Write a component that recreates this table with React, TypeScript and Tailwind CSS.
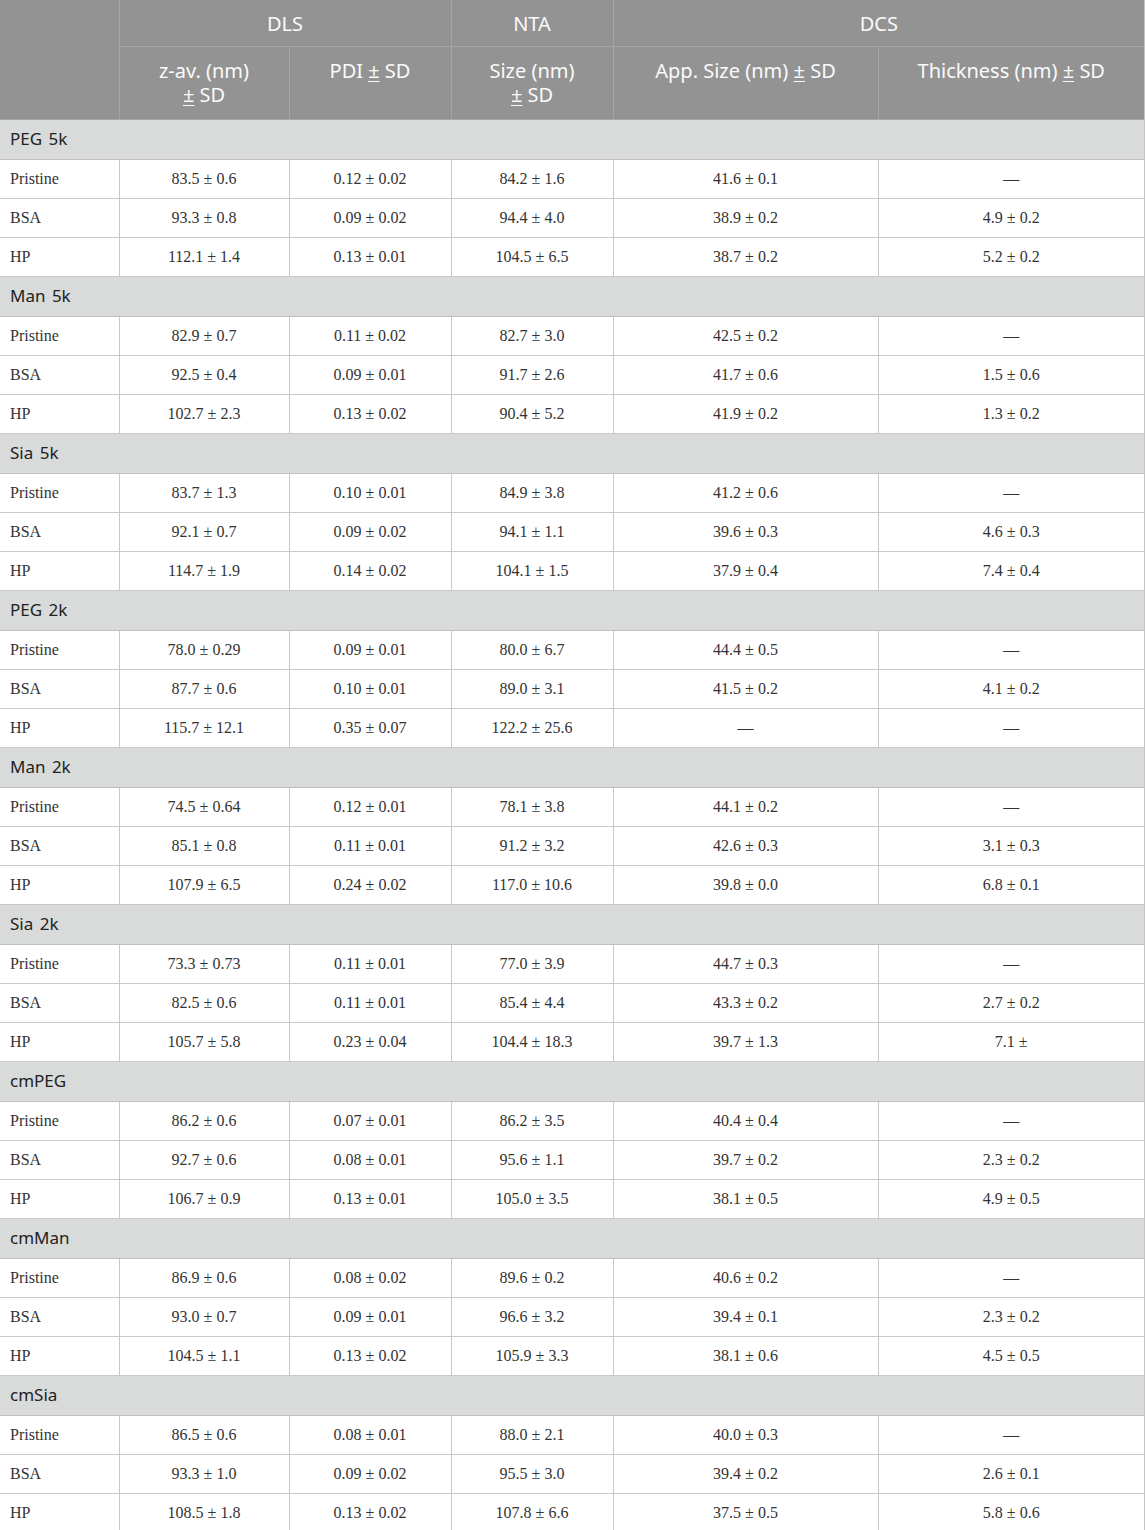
import React from "react";

type Row = [string, string, string, string, string, string];

const groups: { name: string; rows: Row[] }[] = [
  {
    name: "PEG 5k",
    rows: [
      ["Pristine", "83.5 ± 0.6", "0.12 ± 0.02", "84.2 ± 1.6", "41.6 ± 0.1", "—"],
      ["BSA", "93.3 ± 0.8", "0.09 ± 0.02", "94.4 ± 4.0", "38.9 ± 0.2", "4.9 ± 0.2"],
      ["HP", "112.1 ± 1.4", "0.13 ± 0.01", "104.5 ± 6.5", "38.7 ± 0.2", "5.2 ± 0.2"],
    ],
  },
  {
    name: "Man 5k",
    rows: [
      ["Pristine", "82.9 ± 0.7", "0.11 ± 0.02", "82.7 ± 3.0", "42.5 ± 0.2", "—"],
      ["BSA", "92.5 ± 0.4", "0.09 ± 0.01", "91.7 ± 2.6", "41.7 ± 0.6", "1.5 ± 0.6"],
      ["HP", "102.7 ± 2.3", "0.13 ± 0.02", "90.4 ± 5.2", "41.9 ± 0.2", "1.3 ± 0.2"],
    ],
  },
  {
    name: "Sia 5k",
    rows: [
      ["Pristine", "83.7 ± 1.3", "0.10 ± 0.01", "84.9 ± 3.8", "41.2 ± 0.6", "—"],
      ["BSA", "92.1 ± 0.7", "0.09 ± 0.02", "94.1 ± 1.1", "39.6 ± 0.3", "4.6 ± 0.3"],
      ["HP", "114.7 ± 1.9", "0.14 ± 0.02", "104.1 ± 1.5", "37.9 ± 0.4", "7.4 ± 0.4"],
    ],
  },
  {
    name: "PEG 2k",
    rows: [
      ["Pristine", "78.0 ± 0.29", "0.09 ± 0.01", "80.0 ± 6.7", "44.4 ± 0.5", "—"],
      ["BSA", "87.7 ± 0.6", "0.10 ± 0.01", "89.0 ± 3.1", "41.5 ± 0.2", "4.1 ± 0.2"],
      ["HP", "115.7 ± 12.1", "0.35 ± 0.07", "122.2 ± 25.6", "—", "—"],
    ],
  },
  {
    name: "Man 2k",
    rows: [
      ["Pristine", "74.5 ± 0.64", "0.12 ± 0.01", "78.1 ± 3.8", "44.1 ± 0.2", "—"],
      ["BSA", "85.1 ± 0.8", "0.11 ± 0.01", "91.2 ± 3.2", "42.6 ± 0.3", "3.1 ± 0.3"],
      ["HP", "107.9 ± 6.5", "0.24 ± 0.02", "117.0 ± 10.6", "39.8 ± 0.0", "6.8 ± 0.1"],
    ],
  },
  {
    name: "Sia 2k",
    rows: [
      ["Pristine", "73.3 ± 0.73", "0.11 ± 0.01", "77.0 ± 3.9", "44.7 ± 0.3", "—"],
      ["BSA", "82.5 ± 0.6", "0.11 ± 0.01", "85.4 ± 4.4", "43.3 ± 0.2", "2.7 ± 0.2"],
      ["HP", "105.7 ± 5.8", "0.23 ± 0.04", "104.4 ± 18.3", "39.7 ± 1.3", "7.1 ±"],
    ],
  },
  {
    name: "cmPEG",
    rows: [
      ["Pristine", "86.2 ± 0.6", "0.07 ± 0.01", "86.2 ± 3.5", "40.4 ± 0.4", "—"],
      ["BSA", "92.7 ± 0.6", "0.08 ± 0.01", "95.6 ± 1.1", "39.7 ± 0.2", "2.3 ± 0.2"],
      ["HP", "106.7 ± 0.9", "0.13 ± 0.01", "105.0 ± 3.5", "38.1 ± 0.5", "4.9 ± 0.5"],
    ],
  },
  {
    name: "cmMan",
    rows: [
      ["Pristine", "86.9 ± 0.6", "0.08 ± 0.02", "89.6 ± 0.2", "40.6 ± 0.2", "—"],
      ["BSA", "93.0 ± 0.7", "0.09 ± 0.01", "96.6 ± 3.2", "39.4 ± 0.1", "2.3 ± 0.2"],
      ["HP", "104.5 ± 1.1", "0.13 ± 0.02", "105.9 ± 3.3", "38.1 ± 0.6", "4.5 ± 0.5"],
    ],
  },
  {
    name: "cmSia",
    rows: [
      ["Pristine", "86.5 ± 0.6", "0.08 ± 0.01", "88.0 ± 2.1", "40.0 ± 0.3", "—"],
      ["BSA", "93.3 ± 1.0", "0.09 ± 0.02", "95.5 ± 3.0", "39.4 ± 0.2", "2.6 ± 0.1"],
      ["HP", "108.5 ± 1.8", "0.13 ± 0.02", "107.8 ± 6.6", "37.5 ± 0.5", "5.8 ± 0.6"],
    ],
  },
];

const sans = "font-['Noto_Sans','Open_Sans',sans-serif]";
const serif = "font-['Liberation_Serif','Times_New_Roman',serif]";

function Pm() {
  return <span className="underline underline-offset-[3px] decoration-1">±</span>;
}

export default function App() {
  const th = `border border-[#a6a6a6] bg-[#939393] font-normal text-[#fafafa] text-[20px] ${sans}`;
  const sub = `${th} align-top pt-[12px] leading-[24px]`;
  const td = `border border-[#c9c9c9] text-center text-[16px] text-[#333] ${serif}`;
  return (
    <div className="w-[1145px] bg-white">
      <table className="w-[1145px] table-fixed border-collapse border-r-2 border-r-[#c4c4c4]">
        <colgroup>
          <col className="w-[119px]" />
          <col className="w-[170px]" />
          <col className="w-[162px]" />
          <col className="w-[162px]" />
          <col className="w-[265px]" />
          <col className="w-[267px]" />
        </colgroup>
        <thead>
          <tr className="h-[46px]">
            <th className={`${th} border-l-0 border-t-0`} rowSpan={2} />
            <th className={`${th} border-t-0 pt-[3px]`} colSpan={2}>DLS</th>
            <th className={`${th} border-t-0 pt-[3px]`}>NTA</th>
            <th className={`${th} border-t-0 pt-[3px]`} colSpan={2}>DCS</th>
          </tr>
          <tr className="h-[73px]">
            <th className={sub}>
              z-av. (nm)
              <br />
              <Pm /> SD
            </th>
            <th className={sub}>
              PDI <Pm /> SD
            </th>
            <th className={sub}>
              Size (nm)
              <br />
              <Pm /> SD
            </th>
            <th className={sub}>
              App. Size (nm) <Pm /> SD
            </th>
            <th className={sub}>
              Thickness (nm) <Pm /> SD
            </th>
          </tr>
        </thead>
        <tbody>
          {groups.map((g) => (
            <React.Fragment key={g.name}>
              <tr className="h-[40px]">
                <td
                  colSpan={6}
                  className={`border-y border-[#c0c0c0] bg-[#d9dbda] pl-[10px] text-left text-[17px] text-[#222] [word-spacing:2px] ${sans}`}
                >
                  {g.name}
                </td>
              </tr>
              {g.rows.map((r, i) => (
                <tr key={i} className="h-[39px]">
                  <td className={`${td} border-l-0 pl-[10px] text-left`}>{r[0]}</td>
                  <td className={td}>{r[1]}</td>
                  <td className={td}>{r[2]}</td>
                  <td className={td}>{r[3]}</td>
                  <td className={td}>{r[4]}</td>
                  <td className={td}>{r[5]}</td>
                </tr>
              ))}
            </React.Fragment>
          ))}
        </tbody>
      </table>
    </div>
  );
}
